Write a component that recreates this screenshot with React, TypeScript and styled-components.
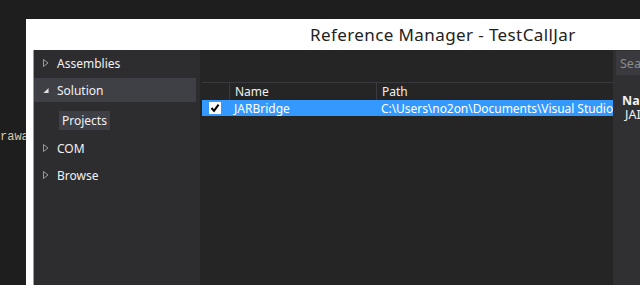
import React from 'react';
import styled, { createGlobalStyle } from 'styled-components';

const GlobalStyle = createGlobalStyle`
  html, body {
    margin: 0;
    padding: 0;
    background: #1e1e1e;
    overflow: hidden;
  }
`;

const uiFont = `'Noto Sans', 'Noto Sans CJK SC', sans-serif`;

const Page = styled.div`
  display: flex;
  width: 640px;
  height: 285px;
  background: #1e1e1e;
  overflow: hidden;
`;

const CodeStrip = styled.div`
  width: 26px;
  flex-shrink: 0;
  overflow: hidden;
  padding-top: 130px;
  font-family: 'Liberation Mono', monospace;
  font-size: 12px;
  color: #d9c8ad;
  white-space: nowrap;
`;

const Window = styled.div`
  flex: 1;
  margin-top: 19px;
  background: #ffffff;
  padding-left: 8px;
  display: flex;
  flex-direction: column;
  min-width: 0;
`;

const TitleBar = styled.div`
  height: 31px;
  display: flex;
  align-items: center;
  padding-left: 276px;
  font-family: ${uiFont};
  font-size: 17px;
  letter-spacing: 0.4px;
  color: #222;
  white-space: nowrap;
`;

const Body = styled.div`
  flex: 1;
  display: flex;
  background: #252526;
  border-left: 1px solid #9a9a9a;
  margin-left: -1px;
`;

const Nav = styled.div`
  width: 166px;
  flex-shrink: 0;
  background: #2d2d30;
  display: flex;
  flex-direction: column;
  gap: 3px;
  padding-top: 1px;
  font-family: ${uiFont};
  font-size: 12px;
  color: #f1f1f1;
`;

const NavRow = styled.div<{ selected?: boolean }>`
  height: 24px;
  margin-right: 4px;
  display: flex;
  align-items: center;
  padding-left: 9px;
  gap: 8px;
  background: ${(p) => (p.selected ? '#3f3f46' : 'transparent')};
`;

const Arrow = styled.span`
  width: 6px;
  height: 8px;
  display: flex;
  align-items: center;
  justify-content: center;
`;

const SubBlock = styled.div`
  padding: 6px 0 3px 25px;
`;

const SubItem = styled.span`
  display: inline-flex;
  align-items: center;
  height: 19px;
  padding: 0 3px;
  background: #3f3f46;
`;

const Grid = styled.div`
  width: 413px;
  flex-shrink: 0;
  display: flex;
  flex-direction: column;
  padding-top: 32px;
  font-family: ${uiFont};
  font-size: 12px;
`;

const GridRow = styled.div<{ header?: boolean; selected?: boolean }>`
  display: grid;
  grid-template-columns: 27px 147px 1fr;
  height: ${(p) => (p.header ? 17 : 16)}px;
  margin-left: 2px;
  background: ${(p) => (p.selected ? '#3399ff' : p.header ? '#252526' : 'transparent')};
  border-top: ${(p) => (p.header ? '1px solid #3a3a3e' : 'none')};
  color: ${(p) => (p.selected ? '#ffffff' : '#f1f1f1')};
`;

const Cell = styled.div<{ divider?: boolean; tight?: boolean }>`
  display: flex;
  align-items: center;
  padding-left: 5px;
  white-space: nowrap;
  overflow: hidden;
  letter-spacing: ${(p) => (p.tight ? '-0.05px' : '0')};
  border-left: ${(p) => (p.divider ? '1px solid #3a3a3e' : 'none')};
`;

const CheckCell = styled.div`
  display: flex;
  align-items: center;
  padding-left: 7px;
`;

const CheckBox = styled.div`
  width: 12px;
  height: 12px;
  background: #ffffff;
  display: flex;
  align-items: center;
  justify-content: center;
`;

const Side = styled.div`
  flex: 1;
  min-width: 0;
  background: #303033;
  padding: 1px 0 0 3px;
  font-family: ${uiFont};
  font-size: 12.5px;
  color: #f1f1f1;
  overflow: hidden;
  white-space: nowrap;
`;

const SearchBox = styled.div`
  height: 24px;
  background: #3a3a3e;
  display: flex;
  align-items: center;
  padding-left: 4px;
  color: #8c8c8c;
  overflow: hidden;
`;

const InfoTitle = styled.div`
  margin-top: 18px;
  padding-left: 6px;
  font-weight: bold;
  line-height: 15px;
  overflow: hidden;
`;

const InfoValue = styled.div`
  padding-left: 9px;
  line-height: 13px;
  overflow: hidden;
`;

const RightArrow = () => (
  <svg width="6" height="8" viewBox="0 0 6 8">
    <path d="M0.5 0.5 L5 4 L0.5 7.5 Z" fill="none" stroke="#9a9a9a" strokeWidth="1" />
  </svg>
);

const DownArrow = () => (
  <svg width="7" height="7" viewBox="0 0 7 7">
    <path d="M6.5 0.5 L6.5 6.5 L0.5 6.5 Z" fill="#e0e0e0" />
  </svg>
);

const Check = () => (
  <svg width="10" height="10" viewBox="0 0 10 10">
    <path d="M1.5 5 L4 7.8 L8.6 1.6" fill="none" stroke="#000" strokeWidth="2" />
  </svg>
);

const App = () => {
  return (
    <>
      <GlobalStyle />
      <Page>
        <CodeStrip>rawa</CodeStrip>
        <Window>
          <TitleBar>Reference Manager - TestCallJar</TitleBar>
          <Body>
            <Nav>
              <NavRow>
                <Arrow>
                  <RightArrow />
                </Arrow>
                Assemblies
              </NavRow>
              <NavRow selected>
                <Arrow>
                  <DownArrow />
                </Arrow>
                Solution
              </NavRow>
              <SubBlock>
                <SubItem>Projects</SubItem>
              </SubBlock>
              <NavRow>
                <Arrow>
                  <RightArrow />
                </Arrow>
                COM
              </NavRow>
              <NavRow>
                <Arrow>
                  <RightArrow />
                </Arrow>
                Browse
              </NavRow>
            </Nav>
            <Grid>
              <GridRow header>
                <Cell />
                <Cell divider>Name</Cell>
                <Cell divider>Path</Cell>
              </GridRow>
              <GridRow selected>
                <CheckCell>
                  <CheckBox>
                    <Check />
                  </CheckBox>
                </CheckCell>
                <Cell>JARBridge</Cell>
                <Cell tight>C:\Users\no2on\Documents\Visual Studio</Cell>
              </GridRow>
            </Grid>
            <Side>
              <SearchBox>Sea</SearchBox>
              <InfoTitle>Na</InfoTitle>
              <InfoValue>JAI</InfoValue>
            </Side>
          </Body>
        </Window>
      </Page>
    </>
  );
};

export default App;
